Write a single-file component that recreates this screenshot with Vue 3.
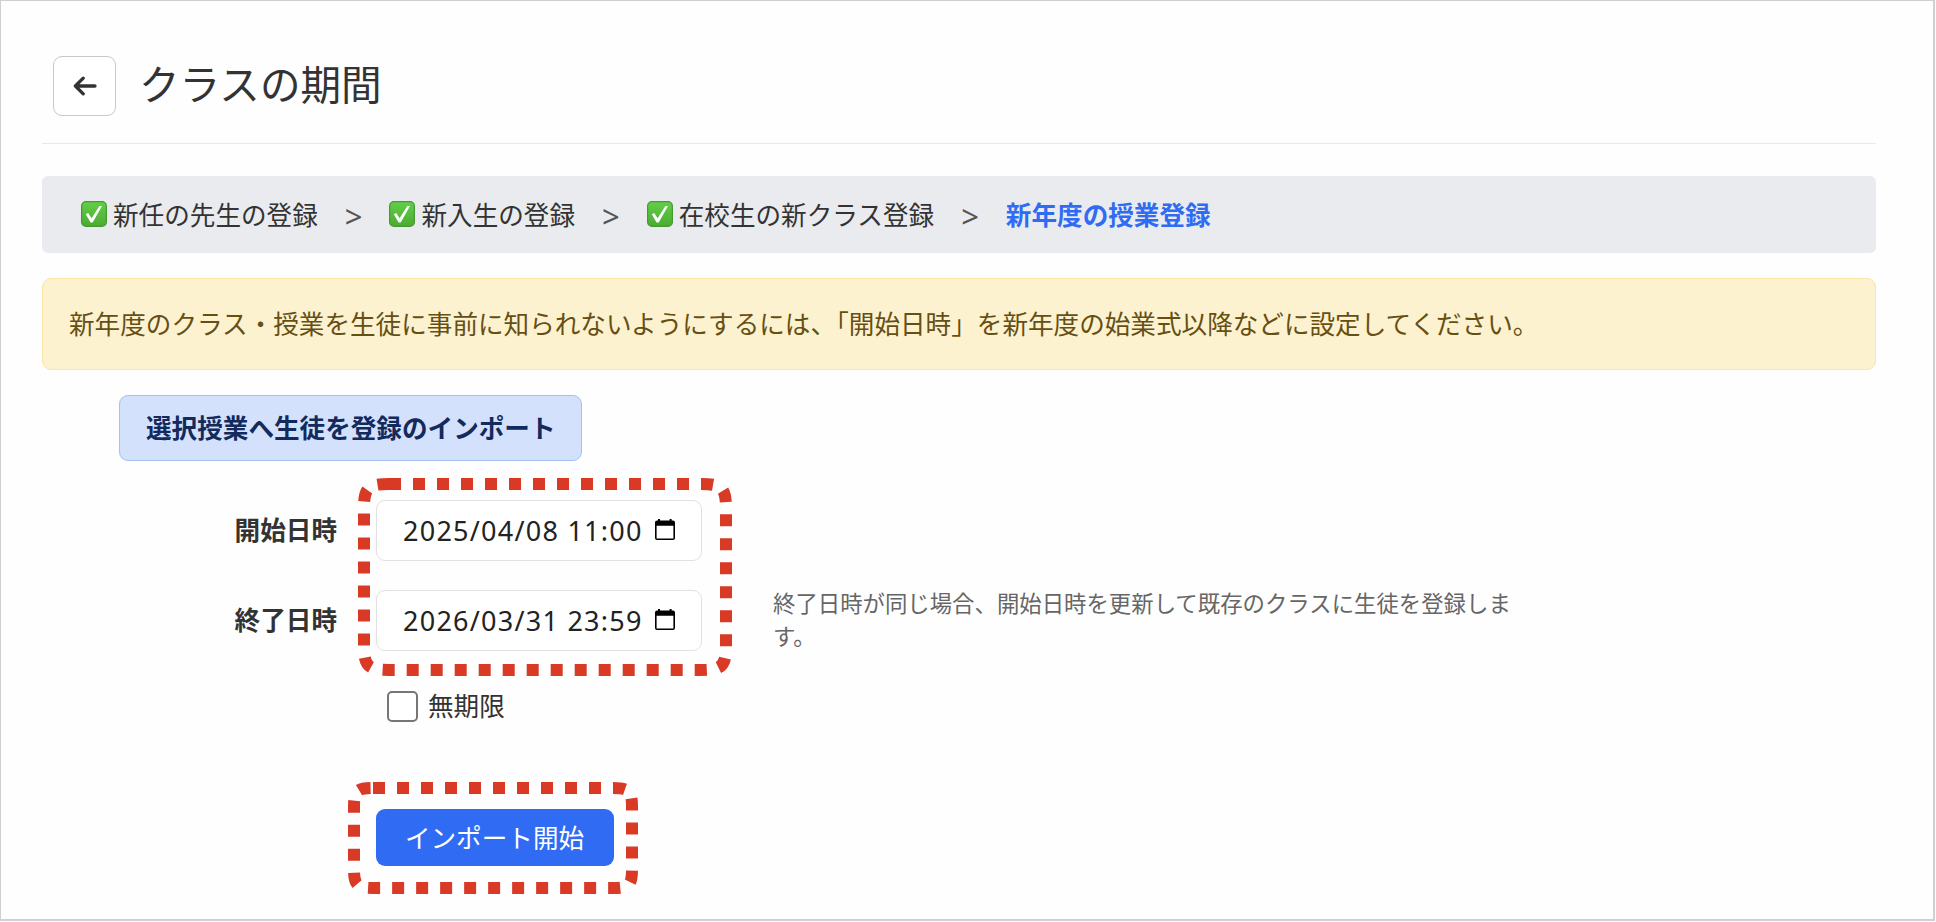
<template>
  <div class="page">
    <header class="page-header">
      <button class="back-button" type="button">
        <svg width="24" height="20" viewBox="0 0 24 20" fill="none" stroke="#333" stroke-width="3.3" stroke-linecap="round" stroke-linejoin="round">
          <path d="M22 10H2.4M10.2 2.2L2.4 10l7.8 7.8" />
        </svg>
      </button>
      <h1>クラスの期間</h1>
    </header>

    <nav class="steps">
      <template v-for="(step, index) in steps" :key="step.label">
        <span v-if="index > 0" class="separator">&gt;</span>
        <span :class="{ step: true, current: !step.done }">
          <svg v-if="step.done" class="check" width="26" height="26" viewBox="0 0 26 26">
            <defs>
              <linearGradient :id="'check' + index" x1="0" y1="0" x2="0" y2="1">
                <stop offset="0" stop-color="#62cf48" />
                <stop offset="1" stop-color="#4bab31" />
              </linearGradient>
            </defs>
            <rect x=".6" y=".6" width="24.8" height="24.8" rx="4.4" :fill="'url(#check' + index + ')'" stroke="#469a35" stroke-width="1.2" />
            <path d="M4.8 13.2l2.4-1.3 3.4 5.4L18.4 5l2.6 0-9.3 16.5H9.6z" fill="#fff" />
          </svg>
          {{ step.label }}
        </span>
      </template>
    </nav>

    <div class="alert">新年度のクラス・授業を生徒に事前に知られないようにするには、「開始日時」を新年度の始業式以降などに設定してください。</div>

    <form class="import-form" @submit.prevent>
      <div class="import-type">選択授業へ生徒を登録のインポート</div>

      <div class="row">
        <label for="start">開始日時</label>
        <div class="date-field">
          <input id="start" v-model="startDate" type="text" />
          <svg class="calendar" width="20" height="21" viewBox="0 0 20 21">
            <path d="M3 0h2v1.5h9.6V0h2v1.5H18a2 2 0 0 1 2 2V19a2 2 0 0 1-2 2H2a2 2 0 0 1-2-2V3.500a2 2 0 0 1 2-2h1zM1.600 6.700v12.700h16.800V6.700z" fill-rule="evenodd" />
          </svg>
          <svg class="marker marker-dates" width="374" height="198">
            <path :d="markerPath(362, 186, 25)" />
          </svg>
        </div>
      </div>

      <div class="row">
        <label for="end">終了日時</label>
        <div class="date-field">
          <input id="end" v-model="endDate" type="text" />
          <svg class="calendar" width="20" height="21" viewBox="0 0 20 21">
            <path d="M3 0h2v1.5h9.6V0h2v1.5H18a2 2 0 0 1 2 2V19a2 2 0 0 1-2 2H2a2 2 0 0 1-2-2V3.500a2 2 0 0 1 2-2h1zM1.600 6.700v12.700h16.800V6.700z" fill-rule="evenodd" />
          </svg>
        </div>
        <p class="help">終了日時が同じ場合、開始日時を更新して既存のクラスに生徒を登録します。</p>
      </div>

      <label class="unlimited">
        <input v-model="unlimited" type="checkbox" />
        <span>無期限</span>
      </label>

      <div class="actions">
        <button class="submit" type="submit">インポート開始</button>
        <svg class="marker marker-submit" width="290" height="112">
          <path :d="markerPath(278, 100, 19)" />
        </svg>
      </div>
    </form>
  </div>
</template>

<script setup>
import { ref } from 'vue';

const steps = [
  { label: '新任の先生の登録', done: true },
  { label: '新入生の登録', done: true },
  { label: '在校生の新クラス登録', done: true },
  { label: '新年度の授業登録', done: false },
];

const startDate = ref('2025/04/08 11:00');
const endDate = ref('2026/03/31 23:59');
const unlimited = ref(false);

// rounded outline, clockwise from the top left, inset by half of the 12px stroke
const markerPath = (w, h, r) => {
  const k = r * 0.85;
  return `M${6 + r} 6h${w - 2 * r}c${k} 0 ${r} ${r - k} ${r} ${r}` +
    `v${h - 2 * r}c0 ${k} ${k - r} ${r} ${-r} ${r}` +
    `h${2 * r - w}c${-k} 0 ${-r} ${k - r} ${-r} ${-r}` +
    `v${2 * r - h}c0 ${-k} ${r - k} ${-r} ${r} ${-r}`;
};
</script>

<style>
body {
  margin: 0;
  background: #fff;
}
</style>

<style scoped>
.page {
  box-sizing: border-box;
  width: 1935px;
  height: 921px;
  padding: 55px 57px 0 41px;
  border: solid #d0d0d0;
  border-width: 1px 2px 2px 1px;
  overflow: hidden;
  background: #fefefe;
  color: #333;
  font-family: "Noto Sans CJK JP", sans-serif;
  font-size: 25.6px;
  line-height: 38px;
}

button,
input {
  font-family: inherit;
  font-size: inherit;
}

.page-header {
  display: flex;
  align-items: flex-start;
  box-sizing: border-box;
  height: 88px;
  padding-left: 11px;
  border-bottom: 1px solid #e9e9eb;
}

.back-button {
  display: flex;
  align-items: center;
  justify-content: center;
  box-sizing: border-box;
  width: 63px;
  height: 60px;
  padding: 0;
  border: 1px solid #c8c8c8;
  border-radius: 9px;
  background: #fff;
}

h1 {
  margin: 0 0 0 23px;
  font-size: 40.6px;
  font-weight: 400;
  line-height: 54px;
}

.steps {
  display: flex;
  align-items: center;
  box-sizing: border-box;
  height: 77px;
  margin-top: 32px;
  padding: 0 0 2px 39px;
  border-radius: 6px;
  background: #e9ebee;
}

.step {
  display: flex;
  align-items: center;
}

.check {
  margin-right: 6px;
}

.separator {
  width: 71.7px;
  padding-top: 4px;
  color: #555;
  font-family: "Noto Sans", sans-serif;
  font-size: 31px;
  text-align: center;
}

.current {
  color: #306cf3;
  font-weight: 700;
}

.alert {
  display: flex;
  align-items: center;
  box-sizing: border-box;
  height: 92px;
  margin-top: 25px;
  padding: 0 0 2px 26px;
  border: 1px solid #fae6a4;
  border-radius: 9px;
  background: #fdf2d0;
  color: #664f13;
}

.import-form {
  margin-top: 25px;
  padding-left: 77px;
}

.import-type {
  display: flex;
  align-items: center;
  box-sizing: border-box;
  width: 463px;
  height: 66px;
  margin-bottom: 39px;
  padding: 0 0 2px 26px;
  border: 1px solid #a6c1ee;
  border-radius: 9px;
  background: #d3e1fc;
  color: #122a5c;
  font-weight: 700;
}

.row {
  display: flex;
  align-items: center;
  height: 61px;
  margin-bottom: 29px;
}

.row label {
  width: 218px;
  margin-right: 39px;
  padding-bottom: 4px;
  font-weight: 700;
  text-align: right;
}

.date-field {
  position: relative;
  display: flex;
  align-items: center;
  box-sizing: border-box;
  width: 326px;
  height: 61px;
  padding-left: 26px;
  border: 1px solid #dfe1e4;
  border-radius: 9px;
  background: #fff;
}

.date-field input {
  width: 253px;
  padding: 0;
  border: 0;
  outline: 0;
  background: none;
  color: #222;
  font-family: "Noto Sans", sans-serif;
  font-size: 27px;
  letter-spacing: 1.25px;
}

.calendar {
  margin: 0 0 3px -1px;
}

.help {
  width: 745px;
  margin: 0 0 0 71px;
  padding-bottom: 3px;
  color: #666;
  font-size: 22.4px;
  line-height: 33px;
}

.unlimited {
  display: flex;
  align-items: center;
  height: 38px;
  margin: 36px 0 0 268px;
}

.unlimited input {
  appearance: none;
  box-sizing: border-box;
  width: 31px;
  height: 31px;
  margin: 0 10px 0 0;
  border: 2px solid #767676;
  border-radius: 5px;
  background: #fff;
}

.unlimited span {
  padding-bottom: 2px;
}

.actions {
  position: relative;
  width: 238px;
  margin: 84px 0 0 257px;
}

.submit {
  display: block;
  width: 238px;
  height: 57px;
  padding: 0 1px 3px 0;
  border: 0;
  border-radius: 9px;
  background: #306cf3;
  color: #fff;
}

.marker {
  position: absolute;
  pointer-events: none;
}

.marker path {
  fill: none;
  stroke: #d93a26;
  stroke-width: 12;
  stroke-dasharray: 12 12;
}

.marker-dates {
  top: -23px;
  left: -19px;
}

.marker-submit {
  top: -27px;
  left: -28px;
}
</style>
